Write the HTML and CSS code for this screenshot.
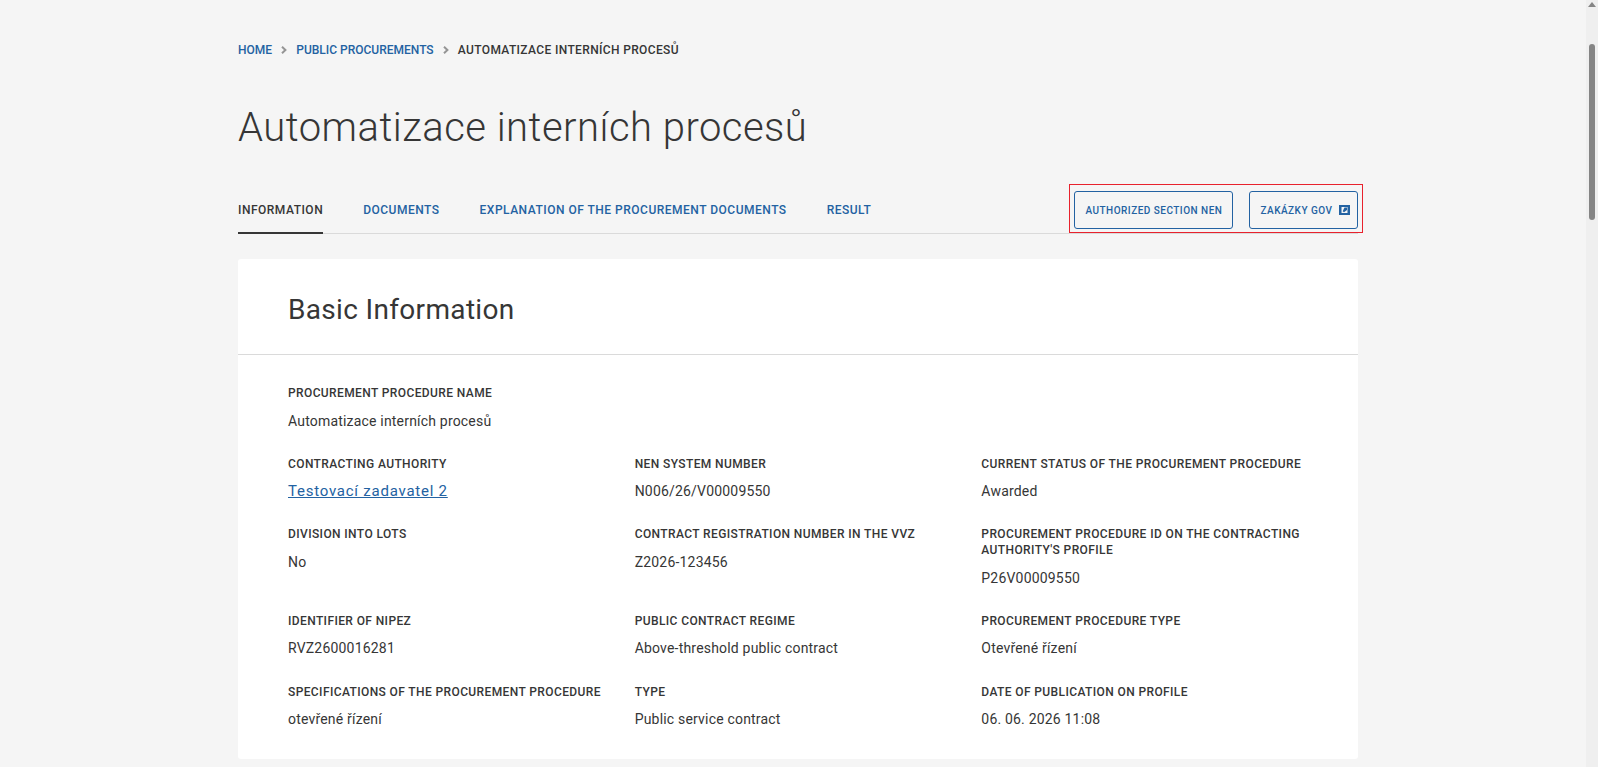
FILE: index.html
```html
<!DOCTYPE html>
<html lang="en"><head><meta charset="utf-8"><title>Automatizace interních procesů</title><link rel="stylesheet" href="styles.css"></head>
<body>
<div class="page">
<nav class="crumbs"><a>Home</a><svg viewBox="0 0 6 8"><path d="M1 .8 4.4 4 1 7.2"/></svg><a>Public procurements</a><svg viewBox="0 0 6 8"><path d="M1 .8 4.4 4 1 7.2"/></svg><span>Automatizace interních procesů</span></nav>
<h1>Automatizace interních procesů</h1>
<div class="tabbar">
<div class="tabs"><a class="active">Information</a><a>Documents</a><a>Explanation of the procurement documents</a><a>Result</a></div>
<div class="actions"><a>Authorized section NEN</a><a class="gov">Zakázky GOV<svg class="ext" viewBox="0 0 11 10"><path class="box" d="M0 0h11v10H0zM2.500 2v6h6V2z"/><path d="M5.500 2.500h2.500v2.500L5 7.300 3.700 6.200z"/></svg></a></div>
</div>
<section class="card">
<h2>Basic Information</h2>
<dl class="grid">
<div class="wide"><dt>Procurement procedure name</dt><dd>Automatizace interních procesů</dd></div>
<div><dt>Contracting authority</dt><dd><a class="link">Testovací zadavatel 2</a></dd></div>
<div><dt>NEN system number</dt><dd>N006/26/V00009550</dd></div>
<div><dt>Current status of the procurement procedure</dt><dd>Awarded</dd></div>
<div><dt>Division into lots</dt><dd>No</dd></div>
<div><dt>Contract registration number in the VVZ</dt><dd>Z2026-123456</dd></div>
<div><dt>Procurement procedure ID on the contracting authority's profile</dt><dd>P26V00009550</dd></div>
<div><dt>Identifier of NIPEZ</dt><dd>RVZ2600016281</dd></div>
<div><dt>Public contract regime</dt><dd>Above-threshold public contract</dd></div>
<div><dt>Procurement procedure type</dt><dd>Otevřené řízení</dd></div>
<div><dt>Specifications of the procurement procedure</dt><dd>otevřené řízení</dd></div>
<div><dt>Type</dt><dd>Public service contract</dd></div>
<div><dt>Date of publication on profile</dt><dd>06. 06. 2026 11:08</dd></div>
</dl>
</section>
</div>
<div class="scroll"><svg viewBox="0 0 12 8"><path d="M6 2 10 7H2z"/></svg><div class="thumb"></div></div>
</body></html>
```

FILE: styles.css
```css
*{box-sizing:border-box}
body{margin:0;height:767px;overflow:hidden;background:#f5f5f5;color:#363636;font-family:Roboto,sans-serif;display:flex;justify-content:space-between}
.page{width:1120px;margin-left:238px;padding-top:41px}
.crumbs{display:flex;align-items:center;height:18px;font-size:12px;font-weight:500;text-transform:uppercase}
.crumbs span{letter-spacing:.36px}
.crumbs a,.tabs a,.actions a,.link{color:#2362a2}
.crumbs svg{width:6px;height:8px;margin:0 9px 1px 9.2px;fill:none;stroke:#959595;stroke-width:2}
h1{margin:43px 0 0;font-size:40px;line-height:52px;font-weight:300;letter-spacing:.48px}
.tabbar{margin-top:37px;height:43px;display:flex;justify-content:space-between;border-bottom:1px solid #dadada}
.tabs{display:flex;gap:40px}
.tabs a{height:43px;padding-top:10px;font-size:12px;line-height:18px;font-weight:500;letter-spacing:.5px;text-transform:uppercase}
.tabs .active{color:#363636;border-bottom:2px solid #363636}
.actions{display:flex;gap:16px;height:49px;margin:-7px -5px 0 0;padding:6px 4px;border:1px solid #e8222d}
.actions a{width:159px;height:38px;padding-left:10.500px;display:flex;align-items:center;border:1px solid #2362a2;border-radius:3px;font-size:10px;font-weight:500;letter-spacing:.48px;white-space:nowrap;text-transform:uppercase}
.actions .gov{width:109px}
.ext{width:11px;height:10px;flex:none;margin:-1px 0 0 7px;fill:#2362a2}
.ext .box{fill-rule:evenodd}
.card{margin-top:25px;height:500px;background:#fff;border-radius:3px}
h2{margin:0;height:96px;padding:32px 50px 0;border-bottom:1px solid #dadada;font-size:28px;line-height:38px;font-weight:400;letter-spacing:.33px}
.grid{margin:0;padding:30.2px 50px 0;display:grid;grid-template-columns:repeat(3,1fr);column-gap:20px;row-gap:23.2px}
.wide{grid-column:1/-1}
dt{font-size:12px;line-height:16px;font-weight:500;letter-spacing:.39px;text-transform:uppercase}
dd{margin:7.4px 0 0;height:24px;font-size:14px;line-height:24px;letter-spacing:.19px}
.link{font-size:15px;letter-spacing:.76px;text-decoration:underline}
.scroll{width:12px;height:767px;background:#efefef}
.scroll svg{display:block;width:12px;height:8px;fill:#858585}
.thumb{width:6px;height:176px;margin:36px 0 0 3px;background:#858585;border-radius:3px}
```
